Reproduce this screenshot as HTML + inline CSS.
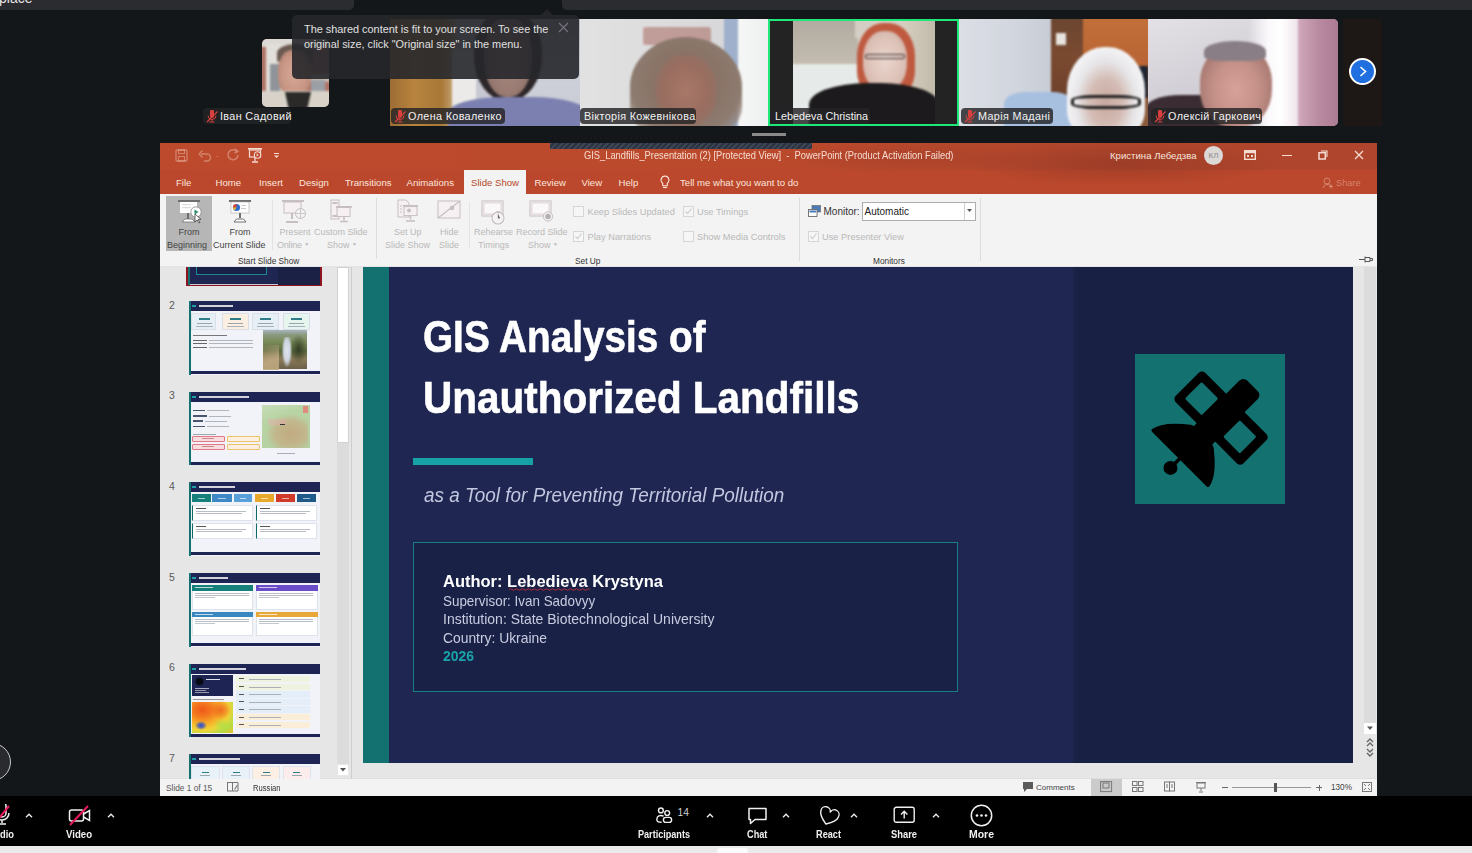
<!DOCTYPE html>
<html><head><meta charset="utf-8">
<style>
*{margin:0;padding:0;box-sizing:border-box}
html,body{width:1472px;height:853px;overflow:hidden;background:#14171a;font-family:"Liberation Sans",sans-serif;position:relative}
.a{position:absolute}
.t{position:absolute;white-space:nowrap;line-height:1}
</style></head><body>
<div class="a" style="left:0px;top:0px;width:354px;height:10px;background:#2b2c2f;border-radius:0 0 5px 0"></div>
<div class="a" style="left:562px;top:0px;width:910px;height:10px;background:#2b2c2f;border-radius:0 0 0 5px"></div>
<div class="t" style="left:-1px;top:-9.5px;font-size:14px;color:#e6e6e6;font-weight:normal;">place</div>
<div class="a" style="left:262px;top:39px;width:67px;height:68px;overflow:hidden;background:#b07466;border-radius:5px"><div class="a" style="left:0;top:0;width:67px;height:68px;filter:blur(1.2px)"><div class="a" style="left:-3px;top:-3px;width:73px;height:11px;background:#dcd8d4;"></div><div class="a" style="left:4px;top:5px;width:16px;height:52px;background:#e2deda;"></div><div class="a" style="left:8px;top:25px;width:10px;height:30px;background:#8e949a;"></div><div class="a" style="left:46px;top:35px;width:24px;height:8px;background:#c8b8b0;"></div><div class="a" style="left:49px;top:41px;width:14px;height:18px;background:#9aa0a6;"></div><div class="a" style="left:15px;top:5px;width:36px;height:18px;background:#6a5a50;border-radius:50% 50% 10% 10%"></div><div class="a" style="left:16px;top:11px;width:33px;height:48px;background:radial-gradient(ellipse at 50% 50%,#d8aa98 0,#c89684 55%,#a87868 100%);border-radius:42% 42% 45% 45%"></div><div class="a" style="left:-3px;top:52px;width:73px;height:19px;background:#d8d2c8;"></div><div class="a" style="left:23px;top:53px;width:26px;height:18px;background:#2c2a28;clip-path:polygon(0 0,100% 0,85% 100%,15% 100%)"></div></div></div>
<div class="a" style="left:203px;top:108px;width:88px;height:16px;background:rgba(35,35,38,.82);border-radius:4px"></div>
<svg class="a" style="left:206px;top:110px;" width="12" height="13" viewBox="0 0 12 13"><path d="M4 1.5 a2 2 0 0 1 4 0 v4.5 a2 2 0 0 1 -4 0z" fill="#d8403e"/><path d="M2 5.5 a4 4 0 0 0 8 0 M6 9.5 v2 M3.5 12 h5" fill="none" stroke="#d8403e" stroke-width="1"/><path d="M1 12 L11.5 1.5" stroke="#d8403e" stroke-width="1.3"/></svg>
<div class="t" style="left:220px;top:111px;font-size:10.8px;color:#f2f2f2;font-weight:normal;letter-spacing:.35px">Іван Садовий</div>
<div class="a" style="left:390px;top:19px;width:190px;height:107px;overflow:hidden;background:#c8c8d2;"><div class="a" style="left:0;top:0;width:190px;height:107px;filter:blur(1.2px)"><div class="a" style="left:-3px;top:-3px;width:68px;height:113px;background:linear-gradient(90deg,#9a6a34,#b8843e 40%,#a87838 80%,#c8a878);"></div><div class="a" style="left:62px;top:30px;width:24px;height:65px;background:#eceae8;"></div><div class="a" style="left:118px;top:-3px;width:75px;height:113px;background:linear-gradient(180deg,#b0b4be,#cdd0d8 60%,#c8cad6);"></div><div class="a" style="left:84px;top:-10px;width:68px;height:92px;background:#2c2628;border-radius:48%"></div><div class="a" style="left:94px;top:-2px;width:48px;height:80px;background:radial-gradient(ellipse at 50% 55%,#a88a80 0,#9a7c74 50%,#7a6058 100%);border-radius:46%"></div><div class="a" style="left:58px;top:78px;width:140px;height:40px;background:#7b80b0;border-radius:40% 40% 0 0"></div></div></div>
<div class="a" style="left:391px;top:108px;width:114px;height:16px;background:rgba(35,35,38,.82);border-radius:4px"></div>
<svg class="a" style="left:394px;top:110px;" width="12" height="13" viewBox="0 0 12 13"><path d="M4 1.5 a2 2 0 0 1 4 0 v4.5 a2 2 0 0 1 -4 0z" fill="#d8403e"/><path d="M2 5.5 a4 4 0 0 0 8 0 M6 9.5 v2 M3.5 12 h5" fill="none" stroke="#d8403e" stroke-width="1"/><path d="M1 12 L11.5 1.5" stroke="#d8403e" stroke-width="1.3"/></svg>
<div class="t" style="left:408px;top:111px;font-size:10.8px;color:#f2f2f2;font-weight:normal;letter-spacing:.35px">Олена Коваленко</div>
<div class="a" style="left:580px;top:19px;width:189px;height:107px;overflow:hidden;background:#dcdcdc;"><div class="a" style="left:0;top:0;width:189px;height:107px;filter:blur(1.2px)"><div class="a" style="left:-3px;top:-3px;width:148px;height:113px;background:linear-gradient(90deg,#e2e2e2,#d8d8da);"></div><div class="a" style="left:144px;top:-3px;width:14px;height:113px;background:#9fb0cc;"></div><div class="a" style="left:158px;top:-3px;width:34px;height:113px;background:linear-gradient(90deg,#f6f6f6,#eceff0);"></div><div class="a" style="left:63px;top:8px;width:68px;height:18px;background:rgba(160,80,70,.45);border-radius:3px"></div><div class="a" style="left:50px;top:18px;width:112px;height:100px;background:radial-gradient(ellipse at 50% 45%,#8a6a5e 0,#8a7468 45%,#8e7c70 70%,rgba(150,135,125,0) 100%);border-radius:50% 50% 30% 30%"></div><div class="a" style="left:76px;top:36px;width:60px;height:72px;background:radial-gradient(ellipse at 50% 50%,#a87868 0,#9a6e60 50%,rgba(150,110,95,0) 100%);border-radius:45%"></div></div></div>
<div class="a" style="left:580px;top:108px;width:116px;height:16px;background:rgba(35,35,38,.82);border-radius:4px"></div>
<div class="t" style="left:584px;top:111px;font-size:10.8px;color:#f2f2f2;font-weight:normal;letter-spacing:.35px">Вікторія Кожевнікова</div>
<div class="a" style="left:768px;top:19px;width:191px;height:107px;background:#232323;border:2px solid #1ee87a"></div>
<div class="a" style="left:793px;top:21px;width:142px;height:103px;overflow:hidden;background:#d8d4cc;"><div class="a" style="left:0;top:0;width:142px;height:103px;filter:blur(1.2px)"><div class="a" style="left:-3px;top:-3px;width:68px;height:46px;background:linear-gradient(180deg,#b0aaa0,#c4bcb0);"></div><div class="a" style="left:-3px;top:43px;width:70px;height:63px;background:#e6eae8;"></div><div class="a" style="left:62px;top:-3px;width:50px;height:20px;background:#d4cec4;"></div><div class="a" style="left:110px;top:-3px;width:35px;height:109px;background:linear-gradient(90deg,#d6cebf,#c0b8a8);"></div><div class="a" style="left:64px;top:2px;width:58px;height:74px;background:#bf5a40;border-radius:45% 45% 35% 35%"></div><div class="a" style="left:70px;top:10px;width:44px;height:60px;background:radial-gradient(ellipse at 50% 50%,#ead6ce 0,#dcc0b6 60%,#c8a090);border-radius:45%"></div><div class="a" style="left:72px;top:33px;width:40px;height:5px;background:transparent;border:1.4px solid #3a3030;border-radius:2px"></div><div class="a" style="left:16px;top:62px;width:130px;height:48px;background:#1c1a1c;border-radius:45% 45% 0 0"></div></div></div>
<div class="a" style="left:771px;top:108px;width:99px;height:16px;background:rgba(35,35,38,.82);border-radius:4px"></div>
<div class="t" style="left:775px;top:111px;font-size:10.8px;color:#f2f2f2;font-weight:normal;letter-spacing:0">Lebedeva Christina</div>
<div class="a" style="left:959px;top:19px;width:189px;height:107px;overflow:hidden;background:#d2d6de;"><div class="a" style="left:0;top:0;width:189px;height:107px;filter:blur(1.2px)"><div class="a" style="left:-3px;top:-3px;width:95px;height:113px;background:linear-gradient(90deg,#dcdfe6,#d0d4dc 70%,#c8ccd4);"></div><div class="a" style="left:92px;top:-3px;width:32px;height:100px;background:linear-gradient(180deg,#6a4630,#7a4a30 40%,#6a3e28);"></div><div class="a" style="left:97px;top:14px;width:10px;height:12px;background:#e8e4e0;"></div><div class="a" style="left:124px;top:-3px;width:68px;height:50px;background:linear-gradient(180deg,#c4703a,#b86434);"></div><div class="a" style="left:124px;top:47px;width:68px;height:63px;background:#8a5a3a;"></div><div class="a" style="left:175px;top:47px;width:14px;height:32px;background:#1e2430;"></div><div class="a" style="left:45px;top:73px;width:70px;height:40px;background:#a8c0e0;border-radius:30% 30% 0 0"></div><div class="a" style="left:108px;top:28px;width:78px;height:90px;background:radial-gradient(ellipse at 50% 62%,#c8a8a0 0,#d4bcb4 30%,#e6e4e6 52%,#f2f2f4 70%);border-radius:48% 48% 30% 30%"></div><div class="a" style="left:112px;top:76px;width:70px;height:14px;background:transparent;border:3.5px solid #222;border-radius:35%"></div></div></div>
<div class="a" style="left:961px;top:108px;width:92px;height:16px;background:rgba(35,35,38,.82);border-radius:4px"></div>
<svg class="a" style="left:964px;top:110px;" width="12" height="13" viewBox="0 0 12 13"><path d="M4 1.5 a2 2 0 0 1 4 0 v4.5 a2 2 0 0 1 -4 0z" fill="#d8403e"/><path d="M2 5.5 a4 4 0 0 0 8 0 M6 9.5 v2 M3.5 12 h5" fill="none" stroke="#d8403e" stroke-width="1"/><path d="M1 12 L11.5 1.5" stroke="#d8403e" stroke-width="1.3"/></svg>
<div class="t" style="left:978px;top:111px;font-size:10.8px;color:#f2f2f2;font-weight:normal;letter-spacing:.35px">Марія Мадані</div>
<div class="a" style="left:1148px;top:19px;width:190px;height:107px;overflow:hidden;background:#d0cfd6;border-radius:0 5px 5px 0"><div class="a" style="left:0;top:0;width:190px;height:107px;filter:blur(1.2px)"><div class="a" style="left:-3px;top:-3px;width:118px;height:113px;background:linear-gradient(160deg,#e4e2e6,#d4d2d8 50%,#c4c2c8);"></div><div class="a" style="left:100px;top:-3px;width:55px;height:113px;background:linear-gradient(90deg,rgba(240,230,240,0),#fbf8fb 35%,#ffffff 60%,#eadce6);"></div><div class="a" style="left:150px;top:-3px;width:43px;height:113px;background:linear-gradient(90deg,#d0a8bc,#b88aa0 50%,#a87890);"></div><div class="a" style="left:-3px;top:76px;width:90px;height:35px;background:#3a2c32;border-radius:40% 40% 0 0"></div><div class="a" style="left:52px;top:26px;width:72px;height:82px;background:radial-gradient(ellipse at 50% 55%,#d6a29a 0,#c49088 45%,#a87a72 75%);border-radius:45%"></div><div class="a" style="left:56px;top:22px;width:62px;height:20px;background:#8a7e86;border-radius:50% 50% 25% 25%"></div></div></div>
<div class="a" style="left:1151px;top:108px;width:111px;height:16px;background:rgba(35,35,38,.82);border-radius:4px"></div>
<svg class="a" style="left:1154px;top:110px;" width="12" height="13" viewBox="0 0 12 13"><path d="M4 1.5 a2 2 0 0 1 4 0 v4.5 a2 2 0 0 1 -4 0z" fill="#d8403e"/><path d="M2 5.5 a4 4 0 0 0 8 0 M6 9.5 v2 M3.5 12 h5" fill="none" stroke="#d8403e" stroke-width="1"/><path d="M1 12 L11.5 1.5" stroke="#d8403e" stroke-width="1.3"/></svg>
<div class="t" style="left:1168px;top:111px;font-size:10.8px;color:#f2f2f2;font-weight:normal;letter-spacing:.35px">Олексій Гаркович</div>
<div class="a" style="left:1343px;top:19px;width:39px;height:107px;background:#1d1816;"></div>
<div class="a" style="left:1349px;top:58px;width:27px;height:27px;border-radius:50%;background:#1f6fe0;border:2.5px solid #fff"></div>
<svg class="a" style="left:1356px;top:65px;" width="13" height="13" viewBox="0 0 13 13"><path d="M4.5 2 l5 4.5 -5 4.5" fill="none" stroke="#fff" stroke-width="1.6"/></svg>
<div class="a" style="left:752px;top:133px;width:34px;height:3px;background:#8a8a8a;"></div>
<div class="a" style="left:292px;top:15px;width:287px;height:64px;border-radius:5px;background:rgba(38,39,43,.9)"></div>
<svg class="a" style="left:540px;top:8px;" width="14" height="8" viewBox="0 0 14 8"><path d="M0 8 L7 1 L14 8z" fill="rgba(38,39,43,.9)"/></svg>
<div class="t" style="left:304px;top:24px;font-size:10.9px;color:#e0e0e0;font-weight:normal;">The shared content is fit to your screen. To see the</div>
<div class="t" style="left:304px;top:39px;font-size:10.9px;color:#e0e0e0;font-weight:normal;">original size, click "Original size" in the menu.</div>
<svg class="a" style="left:558px;top:22px;" width="11" height="11" viewBox="0 0 11 11"><path d="M1 1 L10 10 M10 1 L1 10" stroke="#75727e" stroke-width="1.2"/></svg>
<div class="a" style="left:160px;top:143px;width:1217px;height:653px;background:#e6e6e6;"></div>
<div class="a" style="left:160px;top:143px;width:1217px;height:27px;background:linear-gradient(90deg,#bd4a2d 0%,#bb492c 50%,#b0462c 80%,#ae452c 100%);"></div>
<div class="a" style="left:160px;top:170px;width:1217px;height:24px;background:#bb482c;"></div>
<div class="a" style="left:960px;top:143px;width:320px;height:46px;background:radial-gradient(ellipse 50% 50% at 50% 45%,rgba(140,52,36,.55),rgba(140,52,36,0) 100%);"></div>
<div class="a" style="left:780px;top:143px;width:260px;height:30px;background:radial-gradient(ellipse 50% 50% at 50% 50%,rgba(150,58,40,.35),rgba(150,58,40,0) 100%);"></div>
<div class="a" style="left:550px;top:143px;width:262px;height:6px;background:repeating-linear-gradient(135deg,#3d4656 0 2px,#2c3340 2px 4px);"></div>
<svg class="a" style="left:175px;top:149px;" width="13" height="13" viewBox="0 0 13 13"><rect x="1" y="1" width="11" height="11" rx="1" fill="none" stroke="rgba(240,200,185,.45)" stroke-width="1.3"/><rect x="3.5" y="1" width="6" height="3.5" fill="none" stroke="rgba(240,200,185,.45)" stroke-width="1"/><rect x="3.5" y="7.5" width="6" height="4.5" fill="none" stroke="rgba(240,200,185,.45)" stroke-width="1"/></svg>
<svg class="a" style="left:198px;top:149px;" width="14" height="13" viewBox="0 0 14 13"><path d="M3 5 h6 a3.5 3.5 0 0 1 0 7 h-3" fill="none" stroke="rgba(240,200,185,.45)" stroke-width="1.4"/><path d="M1 5 l3.5-3.5 M1 5 l3.5 3.5" fill="none" stroke="rgba(240,200,185,.45)" stroke-width="1.4"/></svg>
<div class="t" style="left:216px;top:152px;font-size:8px;color:rgba(240,200,185,.45);font-weight:normal;">-</div>
<svg class="a" style="left:226px;top:148px;" width="14" height="14" viewBox="0 0 14 14"><path d="M10.5 3.2 A5 5 0 1 0 12 7" fill="none" stroke="rgba(240,200,185,.45)" stroke-width="1.5"/><path d="M9 1 l3 2.5 -3.5 1.5" fill="none" stroke="rgba(240,200,185,.45)" stroke-width="1.4"/></svg>
<svg class="a" style="left:247px;top:147px;" width="16" height="17" viewBox="0 0 16 17"><rect x="1" y="1" width="14" height="1.6" fill="#f4dcd3"/><rect x="2.5" y="3" width="11" height="7" fill="none" stroke="#f4dcd3" stroke-width="1.2"/><circle cx="10.5" cy="8" r="3.2" fill="#bd4a2d" stroke="#f4dcd3" stroke-width="1.1"/><path d="M9.6 6.5 l2.2 1.5 -2.2 1.5z" fill="#f4dcd3"/><path d="M8 10 v4 M5 15 h6" stroke="#f4dcd3" stroke-width="1.3"/></svg>
<svg class="a" style="left:273px;top:152px;" width="7" height="7" viewBox="0 0 7 7"><rect x="1" y="1" width="5" height="1" fill="#f4dcd3"/><path d="M1 3.5 h5 l-2.5 2.5z" fill="#f4dcd3"/></svg>
<div class="t" style="left:584px;top:150.2px;font-size:10.5px;color:#f6dcd2;font-weight:normal;transform:scaleX(0.887);transform-origin:0 0;">GIS_Landfills_Presentation (2) [Protected View]&nbsp;&nbsp;-&nbsp;&nbsp;PowerPoint (Product Activation Failed)</div>
<div class="t" style="left:1110px;top:151px;font-size:9.6px;color:#f8e4dc;font-weight:normal;">Кристина Лебедзва</div>
<div class="a" style="left:1204px;top:146px;width:19px;height:19px;border-radius:50%;background:#dcd8d6;color:#8a8a8a;font-size:8px;line-height:19px;text-align:center">КЛ</div>
<svg class="a" style="left:1244px;top:150px;" width="12" height="10" viewBox="0 0 12 10"><rect x=".7" y=".7" width="10.6" height="8.6" fill="none" stroke="#f4dcd3" stroke-width="1.4"/><rect x="1" y="1" width="10" height="2.2" fill="#f4dcd3"/><rect x="3" y="5" width="2" height="2" fill="#f4dcd3"/><rect x="7" y="5" width="2" height="2" fill="#f4dcd3"/></svg>
<div class="a" style="left:1282px;top:155px;width:9.5px;height:1.3px;background:#f4dcd3;"></div>
<svg class="a" style="left:1318px;top:150px;" width="10" height="10" viewBox="0 0 10 10"><rect x="1" y="2.7" width="6.3" height="6.3" fill="none" stroke="#f4dcd3" stroke-width="1.5"/><path d="M3 1 h6 v6" fill="none" stroke="#f4dcd3" stroke-width="1.1"/></svg>
<svg class="a" style="left:1354px;top:150px;" width="10" height="10" viewBox="0 0 10 10"><path d="M1 1 L9 9 M9 1 L1 9" stroke="#f4dcd3" stroke-width="1.3"/></svg>
<div class="t" style="left:176px;top:177.5px;font-size:9.6px;color:#fbe6de;font-weight:normal;">File</div>
<div class="t" style="left:215.5px;top:177.5px;font-size:9.6px;color:#fbe6de;font-weight:normal;">Home</div>
<div class="t" style="left:259px;top:177.5px;font-size:9.6px;color:#fbe6de;font-weight:normal;">Insert</div>
<div class="t" style="left:299px;top:177.5px;font-size:9.6px;color:#fbe6de;font-weight:normal;">Design</div>
<div class="t" style="left:345px;top:177.5px;font-size:9.6px;color:#fbe6de;font-weight:normal;">Transitions</div>
<div class="t" style="left:406.5px;top:177.5px;font-size:9.6px;color:#fbe6de;font-weight:normal;">Animations</div>
<div class="t" style="left:534.5px;top:177.5px;font-size:9.6px;color:#fbe6de;font-weight:normal;">Review</div>
<div class="t" style="left:581.5px;top:177.5px;font-size:9.6px;color:#fbe6de;font-weight:normal;">View</div>
<div class="t" style="left:618.5px;top:177.5px;font-size:9.6px;color:#fbe6de;font-weight:normal;">Help</div>
<div class="a" style="left:464px;top:170px;width:62px;height:25px;background:#f3f3f3;"></div>
<div class="t" style="left:471px;top:177.5px;font-size:9.6px;color:#b5472b;font-weight:normal;">Slide Show</div>
<svg class="a" style="left:660px;top:175px;" width="10" height="14" viewBox="0 0 10 14"><path d="M5 1 a4 4 0 0 0 -2.3 7.2 v2.5 h4.6 v-2.5 A4 4 0 0 0 5 1z" fill="none" stroke="#fbe6de" stroke-width="1.1"/><path d="M3 12.5 h4" stroke="#fbe6de" stroke-width="1.1"/></svg>
<div class="t" style="left:680px;top:177.5px;font-size:9.6px;color:#fbe6de;font-weight:normal;">Tell me what you want to do</div>
<svg class="a" style="left:1322px;top:177px;" width="11" height="12" viewBox="0 0 11 12"><circle cx="5" cy="4" r="3" fill="none" stroke="rgba(240,190,175,.5)" stroke-width="1"/><path d="M1 11 a4.5 4.5 0 0 1 8 -2 M7 9.5 h4 M9 7.5 v4" fill="none" stroke="rgba(240,190,175,.5)" stroke-width="1"/></svg>
<div class="t" style="left:1336px;top:179px;font-size:9.2px;color:rgba(240,190,175,.5);font-weight:normal;">Share</div>
<div class="a" style="left:160px;top:194px;width:1217px;height:72px;background:#f3f3f3;"></div>
<div class="a" style="left:160px;top:266px;width:1217px;height:1px;background:#e4e4e4;"></div>
<div class="a" style="left:166px;top:196px;width:46px;height:55px;background:#b6b6b6;"></div>
<svg class="a" style="left:177px;top:199px;" width="26" height="26" viewBox="0 0 26 26"><rect x="1" y="1" width="22" height="2" fill="#6f6f6f"/><rect x="3" y="3" width="17" height="11" fill="#fff"/><rect x="5" y="5" width="9" height="1.2" fill="#ddd"/><rect x="5" y="8" width="9" height="1.2" fill="#ddd"/><path d="M11 14 v6" stroke="#6f6f6f" stroke-width="2"/><path d="M5 23 l3-3 h7 l3 3z" fill="#fff" stroke="#6f6f6f" stroke-width=".8"/><circle cx="19" cy="13" r="5.2" fill="#fff" stroke="#888" stroke-width=".8"/><path d="M17.5 10.5 l4 2.5 -4 2.5z" fill="#2e8b6e"/><path d="M18 15 l0 8 2-2 2 3 1-.6 -2-3 3 0z" fill="#fff" stroke="#333" stroke-width=".7"/></svg>
<div class="t" style="left:178.5px;top:228.3px;font-size:9px;color:#444444;font-weight:normal;">From</div>
<div class="t" style="left:167px;top:241.3px;font-size:9px;color:#444444;font-weight:normal;">Beginning</div>
<svg class="a" style="left:228px;top:199px;" width="26" height="26" viewBox="0 0 26 26"><rect x="1" y="1" width="22" height="2" fill="#6f6f6f"/><rect x="3" y="3" width="18" height="11" fill="#fff" stroke="#aaa" stroke-width=".6"/><circle cx="8.5" cy="8.5" r="3.6" fill="#2f6fcf"/><path d="M8.5 8.5 V4.9 A3.6 3.6 0 0 0 4.9 8.5z" fill="#e0452c"/><path d="M8.5 8.5 H4.9 A3.6 3.6 0 0 0 6.5 11.5z" fill="#f2b830"/><rect x="13" y="6" width="5" height="1" fill="#ccc"/><rect x="13" y="9" width="5" height="1" fill="#ccc"/><path d="M12 14 v5" stroke="#6f6f6f" stroke-width="2"/><path d="M6 23 l2.5-3 h7 l2.5 3z" fill="#fff" stroke="#6f6f6f" stroke-width="1"/></svg>
<div class="t" style="left:229.5px;top:228.3px;font-size:9px;color:#444444;font-weight:normal;">From</div>
<div class="t" style="left:213px;top:241.3px;font-size:9px;color:#444444;font-weight:normal;">Current Slide</div>
<div class="a" style="left:272px;top:200px;width:1px;height:50px;background:#e2e2e2;"></div>
<svg class="a" style="left:281px;top:199px;" width="28" height="26" viewBox="0 0 28 26"><rect x="1" y="1" width="22" height="2" fill="#c6bec2"/><rect x="3" y="3" width="17" height="11" fill="#f7f0f3" stroke="#c6bec2" stroke-width="1"/><path d="M11 14 v6" stroke="#c6bec2" stroke-width="2"/><path d="M5 23 h12" stroke="#c6bec2" stroke-width="2"/><circle cx="19.5" cy="14.5" r="5" fill="#f3f3f3" stroke="#c6bec2" stroke-width="1"/><path d="M14.5 14.5 h10 M19.5 9.5 v10" stroke="#c6bec2" stroke-width=".8"/></svg>
<div class="t" style="left:279.5px;top:228.3px;font-size:9px;color:#b9b9b9;font-weight:normal;">Present</div>
<div class="t" style="left:277px;top:241.3px;font-size:9px;color:#b9b9b9;font-weight:normal;letter-spacing:-.2px">Online <span style="font-size:5px;vertical-align:2px">▼</span></div>
<svg class="a" style="left:329px;top:199px;" width="26" height="26" viewBox="0 0 26 26"><rect x="2" y="1" width="8" height="19" fill="#f7f0f3" stroke="#c6bec2" stroke-width="1"/><rect x="3.5" y="3" width="5" height="2" fill="#c6bec2"/><rect x="3.5" y="16" width="5" height="2" fill="#c6bec2"/><rect x="7" y="7" width="16" height="1.6" fill="#c6bec2"/><rect x="8" y="8.5" width="13" height="9" fill="#f7f0f3" stroke="#c6bec2" stroke-width="1"/><path d="M15 17.5 v4 M11 22.5 h8" stroke="#c6bec2" stroke-width="1.6"/></svg>
<div class="t" style="left:314px;top:228.3px;font-size:9px;color:#b9b9b9;font-weight:normal;">Custom Slide</div>
<div class="t" style="left:327px;top:241.3px;font-size:9px;color:#b9b9b9;font-weight:normal;">Show <span style="font-size:5px;vertical-align:2px">▼</span></div>
<div class="a" style="left:376px;top:198px;width:1px;height:61px;background:#dcdcdc;"></div>
<svg class="a" style="left:395px;top:199px;" width="26" height="26" viewBox="0 0 26 26"><path d="M3 1 h8 l3 3 v14 h-11z" fill="#f7f0f3" stroke="#c6bec2" stroke-width="1"/><path d="M5 7 h2 M5 10 h2 M5 13 h2" stroke="#c6bec2"/><rect x="8" y="6" width="15" height="1.6" fill="#c6bec2"/><rect x="9" y="7.6" width="13" height="9" fill="#f7f0f3" stroke="#c6bec2" stroke-width="1"/><circle cx="14" cy="11.5" r="2" fill="#c6bec2"/><path d="M15.5 16.6 v4 M11 22 h9" stroke="#c6bec2" stroke-width="1.6"/></svg>
<div class="t" style="left:394px;top:228.3px;font-size:9px;color:#b9b9b9;font-weight:normal;">Set Up</div>
<div class="t" style="left:385px;top:241.3px;font-size:9px;color:#b9b9b9;font-weight:normal;">Slide Show</div>
<svg class="a" style="left:437px;top:199px;" width="26" height="22" viewBox="0 0 26 22"><rect x="1" y="2" width="22" height="17" fill="#f7f0f3" stroke="#c6bec2" stroke-width="1"/><path d="M1 19 L23 2" stroke="#c6bec2" stroke-width="1.2"/><circle cx="15" cy="9" r="2.3" fill="#c6bec2"/></svg>
<div class="t" style="left:440px;top:228.3px;font-size:9px;color:#b9b9b9;font-weight:normal;">Hide</div>
<div class="t" style="left:439px;top:241.3px;font-size:9px;color:#b9b9b9;font-weight:normal;">Slide</div>
<div class="a" style="left:469px;top:202px;width:1px;height:46px;background:#e4e4e4;"></div>
<svg class="a" style="left:481px;top:200px;" width="28" height="26" viewBox="0 0 28 26"><rect x="1" y="1" width="21" height="15" fill="#f7f0f3" stroke="#c6bec2" stroke-width="1"/><rect x="3" y="3" width="17" height="11" fill="#fbf8f9" stroke="#c6bec2" stroke-width=".6"/><circle cx="17" cy="18" r="6" fill="#f3f3f3" stroke="#c6bec2" stroke-width="1.1"/><path d="M17 14 v4.5 h2" stroke="#c6bec2" stroke-width="1"/><path d="M15 11 h4 l-2 3z" fill="#c6bec2"/></svg>
<div class="t" style="left:474px;top:228.3px;font-size:9px;color:#b9b9b9;font-weight:normal;">Rehearse</div>
<div class="t" style="left:478px;top:241.3px;font-size:9px;color:#b9b9b9;font-weight:normal;">Timings</div>
<svg class="a" style="left:529px;top:200px;" width="28" height="26" viewBox="0 0 28 26"><rect x="1" y="1" width="21" height="15" fill="#f7f0f3" stroke="#c6bec2" stroke-width="1"/><rect x="3" y="3" width="17" height="11" fill="#fbf8f9" stroke="#c6bec2" stroke-width=".6"/><circle cx="19" cy="16.5" r="4.6" fill="#f3f3f3" stroke="#c6bec2" stroke-width="1"/><circle cx="19" cy="16.5" r="2.8" fill="#b5b0b2"/></svg>
<div class="t" style="left:516px;top:228.3px;font-size:9px;color:#b9b9b9;font-weight:normal;">Record Slide</div>
<div class="t" style="left:528px;top:241.3px;font-size:9px;color:#b9b9b9;font-weight:normal;">Show <span style="font-size:5px;vertical-align:2px">▼</span></div>
<svg class="a" style="left:573px;top:206px;" width="11" height="11" viewBox="0 0 11 11"><rect x=".5" y=".5" width="10" height="10" fill="#f6f6f6" stroke="#d6d6d6"/></svg>
<div class="t" style="left:587.5px;top:208px;font-size:9.3px;color:#b9b9b9;font-weight:normal;">Keep Slides Updated</div>
<svg class="a" style="left:573px;top:231px;" width="11" height="11" viewBox="0 0 11 11"><rect x=".5" y=".5" width="10" height="10" fill="#f6f6f6" stroke="#d6d6d6"/><path d="M2.5 5.5 l2 2 4-5" fill="none" stroke="#cfcfcf" stroke-width="1.2"/></svg>
<div class="t" style="left:587.5px;top:233px;font-size:9.3px;color:#b9b9b9;font-weight:normal;">Play Narrations</div>
<svg class="a" style="left:683px;top:206px;" width="11" height="11" viewBox="0 0 11 11"><rect x=".5" y=".5" width="10" height="10" fill="#f6f6f6" stroke="#d6d6d6"/><path d="M2.5 5.5 l2 2 4-5" fill="none" stroke="#cfcfcf" stroke-width="1.2"/></svg>
<div class="t" style="left:697px;top:208px;font-size:9.3px;color:#b9b9b9;font-weight:normal;">Use Timings</div>
<svg class="a" style="left:683px;top:231px;" width="11" height="11" viewBox="0 0 11 11"><rect x=".5" y=".5" width="10" height="10" fill="#f6f6f6" stroke="#d6d6d6"/></svg>
<div class="t" style="left:697px;top:233px;font-size:9.3px;color:#b9b9b9;font-weight:normal;">Show Media Controls</div>
<div class="t" style="left:575px;top:257px;font-size:8.3px;color:#333;font-weight:normal;">Set Up</div>
<div class="t" style="left:238px;top:257px;font-size:8.3px;color:#333;font-weight:normal;">Start Slide Show</div>
<div class="a" style="left:799px;top:198px;width:1px;height:63px;background:#dcdcdc;"></div>
<svg class="a" style="left:808px;top:205px;" width="13" height="13" viewBox="0 0 13 13"><rect x="4" y=".5" width="8.5" height="6.5" fill="#4a7ab8" stroke="#6b6b6b" stroke-width=".7"/><rect x=".5" y="4.5" width="8.5" height="7" fill="#fff" stroke="#6b6b6b" stroke-width=".9"/><rect x="1.5" y="5.5" width="6.5" height="2" fill="#4a7ab8"/></svg>
<div class="t" style="left:823.5px;top:207px;font-size:10px;color:#333;font-weight:normal;transform:scaleX(1.0);transform-origin:0 0;">Monitor:</div>
<div class="a" style="left:862px;top:202px;width:114px;height:19px;background:#fff;border:1px solid #adadad"></div>
<div class="a" style="left:964px;top:203px;width:1px;height:17px;background:#d0d0d0;"></div>
<svg class="a" style="left:967px;top:209px;" width="6" height="4" viewBox="0 0 6 4"><path d="M0 0 h5 l-2.5 3z" fill="#555"/></svg>
<div class="t" style="left:864.5px;top:207px;font-size:10px;color:#222;font-weight:normal;transform:scaleX(1.0);transform-origin:0 0;">Automatic</div>
<svg class="a" style="left:808px;top:231px;" width="11" height="11" viewBox="0 0 11 11"><rect x=".5" y=".5" width="10" height="10" fill="#f6f6f6" stroke="#d6d6d6"/><path d="M2.5 5.5 l2 2 4-5" fill="none" stroke="#cfcfcf" stroke-width="1.2"/></svg>
<div class="t" style="left:822px;top:233px;font-size:9.3px;color:#b9b9b9;font-weight:normal;">Use Presenter View</div>
<div class="t" style="left:873px;top:257px;font-size:8.3px;color:#333;font-weight:normal;">Monitors</div>
<div class="a" style="left:980px;top:198px;width:1px;height:63px;background:#dcdcdc;"></div>
<svg class="a" style="left:1358px;top:255px;" width="15" height="9" viewBox="0 0 15 9"><path d="M1 4.5 h6 M7 1.5 v6 M7 2.5 h5 v4 h-5 M12 3.5 h2.5 v2 h-2.5" fill="none" stroke="#555" stroke-width="1"/></svg>
<div class="a" style="left:160px;top:267px;width:191px;height:512px;background:#e6e6e6;"></div>
<div class="a" style="left:337px;top:267px;width:12px;height:497px;background:#dcdcdc;"></div>
<div class="a" style="left:337px;top:267px;width:12px;height:176px;background:#ffffff;border:1px solid #d2d2d2"></div>
<svg class="a" style="left:338px;top:765px;" width="10" height="10" viewBox="0 0 10 10"><rect width="10" height="10" fill="#fff"/><path d="M2 3 h6 l-3 3.5z" fill="#555"/></svg>
<div class="a" style="left:351px;top:267px;width:1px;height:512px;background:#cdcdcd;"></div>
<div class="a" style="left:352px;top:267px;width:1025px;height:512px;background:#e6e6e6;"></div>
<div class="a" style="left:1364px;top:267px;width:12px;height:456px;background:#dcdcdc;"></div>
<svg class="a" style="left:1364px;top:723px;" width="12" height="11" viewBox="0 0 12 11"><rect width="12" height="11" fill="#fff"/><path d="M3 3.5 h6 l-3 3.5z" fill="#555"/></svg>
<svg class="a" style="left:1366px;top:738px;" width="8" height="9" viewBox="0 0 8 9"><path d="M1 4 l3-3 3 3 M1 8 l3-3 3 3" fill="none" stroke="#666" stroke-width="1.4"/></svg>
<svg class="a" style="left:1366px;top:748px;" width="8" height="10" viewBox="0 0 8 10"><path d="M1 1 l3 3 3-3 M1 5 l3 3 3-3" fill="none" stroke="#666" stroke-width="1.4"/></svg>
<div class="a" style="left:160px;top:779px;width:1217px;height:17px;background:#f3f3f3;"></div>
<div class="a" style="left:160px;top:778px;width:1217px;height:1px;background:#dedede;"></div>
<div class="t" style="left:166px;top:784px;font-size:8.3px;color:#555;font-weight:normal;">Slide 1 of 15</div>
<svg class="a" style="left:227px;top:782px;" width="12" height="10" viewBox="0 0 12 10"><rect x=".5" y=".5" width="5" height="8.5" fill="none" stroke="#777" stroke-width="1"/><path d="M6 .5 h5 v8.5 h-5" fill="none" stroke="#777" stroke-width="1"/><path d="M7.5 7.5 l3-4.5" stroke="#777" stroke-width="1.1"/></svg>
<div class="t" style="left:253px;top:784px;font-size:8.3px;color:#333;font-weight:normal;transform:scaleX(0.92);transform-origin:0 0;">Russian</div>
<svg class="a" style="left:1022px;top:781px;" width="12" height="12" viewBox="0 0 12 12"><path d="M1 1 h10 v7 h-6 l-3 3 v-3 h-1z" fill="#5a5a5a"/></svg>
<div class="t" style="left:1036px;top:783.5px;font-size:8px;color:#444;font-weight:normal;">Comments</div>
<div class="a" style="left:1091px;top:779px;width:31px;height:17px;background:#cbcbcb;"></div>
<svg class="a" style="left:1100px;top:781px;" width="13" height="12" viewBox="0 0 13 12"><rect x=".6" y=".6" width="11" height="10" fill="none" stroke="#777"/><rect x="3" y="2" width="6" height="5" fill="none" stroke="#777"/></svg>
<svg class="a" style="left:1132px;top:781px;" width="12" height="12" viewBox="0 0 12 12"><rect x=".5" y=".5" width="4.5" height="4" fill="none" stroke="#777"/><rect x="6.5" y=".5" width="4.5" height="4" fill="none" stroke="#777"/><rect x=".5" y="6.5" width="4.5" height="4" fill="none" stroke="#777"/><rect x="6.5" y="6.5" width="4.5" height="4" fill="none" stroke="#777"/></svg>
<svg class="a" style="left:1164px;top:781px;" width="12" height="12" viewBox="0 0 12 12"><rect x=".5" y="1" width="5" height="9" fill="none" stroke="#777"/><rect x="5.5" y="1" width="5" height="9" fill="none" stroke="#777"/><path d="M2 4 h2 M7 4 h2 M2 6 h2 M7 6 h2" stroke="#777"/></svg>
<svg class="a" style="left:1195px;top:781px;" width="12" height="12" viewBox="0 0 12 12"><rect x="1" y="1" width="10" height="1" fill="#777"/><rect x="2" y="2" width="8" height="5" fill="none" stroke="#777"/><path d="M6 7 v3 M4 11 h4" stroke="#777"/></svg>
<div class="a" style="left:1222px;top:787px;width:6px;height:1px;background:#666;"></div>
<div class="a" style="left:1232px;top:787px;width:79px;height:1px;background:#999;"></div>
<div class="a" style="left:1274px;top:783px;width:3px;height:9px;background:#555;"></div>
<div class="a" style="left:1316px;top:787px;width:6px;height:1px;background:#666;"></div>
<div class="a" style="left:1318.5px;top:784.5px;width:1px;height:6px;background:#666;"></div>
<div class="t" style="left:1331px;top:783.5px;font-size:8.2px;color:#444;font-weight:normal;">130%</div>
<svg class="a" style="left:1362px;top:782px;" width="10" height="10" viewBox="0 0 10 10"><rect x=".5" y=".5" width="9" height="9" fill="none" stroke="#777"/><path d="M2 2 l2 2 M8 2 l-2 2 M2 8 l2-2 M8 8 l-2-2" stroke="#777"/></svg>
<div class="a" style="left:363px;top:267px;width:990px;height:496px;background:#1f2652;"></div>
<div class="a" style="left:1073px;top:267px;width:280px;height:496px;background:linear-gradient(90deg,#1b2247 0,#182044 6px,#182043 100%);"></div>
<div class="a" style="left:363px;top:267px;width:26px;height:496px;background:#137270;"></div>
<div class="t" style="left:423px;top:315px;font-size:44px;color:#ffffff;font-weight:bold;font-style:normal;transform:scaleX(0.88);transform-origin:0 0;-webkit-text-stroke:.6px #fff">GIS Analysis of</div>
<div class="t" style="left:423px;top:376px;font-size:44px;color:#ffffff;font-weight:bold;font-style:normal;transform:scaleX(0.92);transform-origin:0 0;-webkit-text-stroke:.6px #fff">Unauthorized Landfills</div>
<div class="a" style="left:413px;top:458px;width:120px;height:7px;background:#17a2a6;"></div>
<div class="t" style="left:424px;top:485.5px;font-size:19.5px;color:#c3c8e0;font-weight:normal;font-style:italic;transform:scaleX(0.97);transform-origin:0 0;">as a Tool for Preventing Territorial Pollution</div>
<div class="a" style="left:413px;top:542px;width:545px;height:150px;background:#1a2146;border:1.5px solid #157f84"></div>
<div class="t" style="left:443px;top:573px;font-size:17px;color:#ffffff;font-weight:bold;font-style:normal;transform:scaleX(0.97);transform-origin:0 0;">Author: Lebedieva Krystyna</div>
<svg class="a" style="left:509px;top:588px;" width="81" height="3" viewBox="0 0 81 3"><path d="M0 1.5 q1.5-1.5 3 0 t3 0 t3 0 t3 0 t3 0 t3 0 t3 0 t3 0 t3 0 t3 0 t3 0 t3 0 t3 0 t3 0 t3 0 t3 0 t3 0 t3 0 t3 0 t3 0 t3 0 t3 0 t3 0 t3 0 t3 0 t3 0 t3 0" fill="none" stroke="#c0303a" stroke-width=".9"/></svg>
<div class="t" style="left:443px;top:594px;font-size:14.5px;color:#c8cce0;font-weight:normal;font-style:normal;transform:scaleX(0.925);transform-origin:0 0;">Supervisor: Ivan Sadovyy</div>
<div class="t" style="left:443px;top:612px;font-size:14.5px;color:#c8cce0;font-weight:normal;font-style:normal;transform:scaleX(0.965);transform-origin:0 0;">Institution: State Biotechnological University</div>
<div class="t" style="left:443px;top:631px;font-size:14.5px;color:#c8cce0;font-weight:normal;font-style:normal;transform:scaleX(0.955);transform-origin:0 0;">Country: Ukraine</div>
<div class="t" style="left:443px;top:649px;font-size:14.5px;color:#18a4a8;font-weight:bold;font-style:normal;transform:scaleX(0.96);transform-origin:0 0;">2026</div>
<svg class="a" style="left:1135px;top:354px;" width="150" height="150" viewBox="0 0 150 150"><rect width="150" height="150" fill="#137270"/>
<g transform="translate(85.7,63.7) rotate(-45)" fill="#000">
 <path fill-rule="evenodd" d="M-16.3 -47.3 h32.6 a4.5 4.5 0 0 1 4.5 4.5 v32.6 a4.5 4.5 0 0 1 -4.5 4.5 h-32.6 a4.5 4.5 0 0 1 -4.5 -4.5 v-32.6 a4.5 4.5 0 0 1 4.5 -4.5z M-10.3 -38.8 a1.5 1.5 0 0 0 -1.5 1.5 v20.6 a1.5 1.5 0 0 0 1.5 1.5 h20.6 a1.5 1.5 0 0 0 1.5 -1.5 v-20.6 a1.5 1.5 0 0 0 -1.5 -1.5z"/>
 <path fill-rule="evenodd" d="M-16.3 6.7 h32.6 a4.5 4.5 0 0 1 4.5 4.5 v32.6 a4.5 4.5 0 0 1 -4.5 4.5 h-32.6 a4.5 4.5 0 0 1 -4.5 -4.5 v-32.6 a4.5 4.5 0 0 1 4.5 -4.5z M-10.3 15.2 a1.5 1.5 0 0 0 -1.5 1.5 v20.6 a1.5 1.5 0 0 0 1.5 1.5 h20.6 a1.5 1.5 0 0 0 1.5 -1.5 v-20.6 a1.5 1.5 0 0 0 -1.5 -1.5z"/>
 <rect x="-30" y="-13" width="75" height="26" rx="5.5"/>
 <path d="M-57 -40.5 Q-44 -39 -26 -16 L-20 0 L-26 16 Q-44 39 -57 40.5 Q-59 40 -58.5 38 L-58.5 -38 Q-59 -40 -57 -40.5Z"/>
 <rect x="-70" y="-1.8" width="14" height="3.6"/>
 <circle cx="-71" cy="0" r="7"/>
</g></svg>
<div class="a" style="left:0;top:0;width:1472px;height:853px;clip-path:inset(267px 1121px 74px 160px)">
<div class="a" style="left:186px;top:260px;width:136px;height:26px;background:#8e1420;"></div>
<div class="a" style="left:188px;top:284px;width:132px;height:1px;background:#c8c8d4;"></div>
<div class="a" style="left:188px;top:260px;width:132px;height:24px;background:#1f2652;"></div>
<div class="a" style="left:278px;top:260px;width:42px;height:24.5px;background:#1a2145;"></div>
<div class="a" style="left:188px;top:260px;width:2px;height:24.5px;background:#137270;"></div>
<div class="a" style="left:196px;top:260px;width:71px;height:14.5px;background:#1a2146;border:.8px solid #1a8a8e"></div>
<div class="a" style="left:188.5px;top:301px;width:131.5px;height:73.5px;background:#f1f3f8;"></div>
<div class="a" style="left:188.5px;top:301px;width:131.5px;height:10px;background:#1e2554;"></div>
<div class="a" style="left:188.5px;top:371.3px;width:131.5px;height:3.2px;background:#1e2554;"></div>
<div class="a" style="left:188.5px;top:301px;width:2px;height:73.5px;background:#137270;"></div>
<div class="a" style="left:192.0px;top:305px;width:4px;height:2px;background:#1aa2a2;"></div>
<div class="a" style="left:199.0px;top:305px;width:34px;height:2.2px;background:rgba(255,255,255,.8);"></div>
<div class="a" style="left:190.7px;top:312.7px;width:25.5px;height:17.7px;background:#e6eff6;border:.5px solid #d8dfe6"></div>
<div class="a" style="left:198.7px;top:318px;width:11px;height:2px;background:#2f7d86;"></div>
<div class="a" style="left:196.7px;top:322.5px;width:15px;height:1px;background:#9aa6ae;"></div>
<div class="a" style="left:195.7px;top:325.5px;width:17px;height:1px;background:#a8b0b8;"></div>
<div class="a" style="left:221.5px;top:312.7px;width:27px;height:17.7px;background:#fcefe2;border:.5px solid #d8dfe6"></div>
<div class="a" style="left:229.5px;top:318px;width:11px;height:2px;background:#2f7d86;"></div>
<div class="a" style="left:227.5px;top:322.5px;width:15px;height:1px;background:#9aa6ae;"></div>
<div class="a" style="left:226.5px;top:325.5px;width:17px;height:1px;background:#a8b0b8;"></div>
<div class="a" style="left:252.29999999999998px;top:312.7px;width:27px;height:17.7px;background:#e6eff6;border:.5px solid #d8dfe6"></div>
<div class="a" style="left:260.29999999999995px;top:318px;width:11px;height:2px;background:#2f7d86;"></div>
<div class="a" style="left:258.29999999999995px;top:322.5px;width:15px;height:1px;background:#9aa6ae;"></div>
<div class="a" style="left:257.29999999999995px;top:325.5px;width:17px;height:1px;background:#a8b0b8;"></div>
<div class="a" style="left:283.1px;top:312.7px;width:27px;height:17.7px;background:#e6f6ef;border:.5px solid #d8dfe6"></div>
<div class="a" style="left:291.1px;top:318px;width:11px;height:2px;background:#2f7d86;"></div>
<div class="a" style="left:289.1px;top:322.5px;width:15px;height:1px;background:#9aa6ae;"></div>
<div class="a" style="left:288.1px;top:325.5px;width:17px;height:1px;background:#a8b0b8;"></div>
<div class="a" style="left:193px;top:334.5px;width:34px;height:1.2px;background:#777;"></div>
<div class="a" style="left:193px;top:339.5px;width:14px;height:1.1px;background:#666;"></div>
<div class="a" style="left:209px;top:339.5px;width:44px;height:1px;background:#b0b4bc;"></div>
<div class="a" style="left:193px;top:343.1px;width:14px;height:1.1px;background:#666;"></div>
<div class="a" style="left:209px;top:343.1px;width:44px;height:1px;background:#b0b4bc;"></div>
<div class="a" style="left:193px;top:346.7px;width:14px;height:1.1px;background:#666;"></div>
<div class="a" style="left:209px;top:346.7px;width:44px;height:1px;background:#b0b4bc;"></div>
<div class="a" style="left:263px;top:330.2px;width:44px;height:39.3px;background:linear-gradient(180deg,#a8b4c0 0%,#8a9a80 12%,#7a8a58 30%,#5f6a40 55%,#8a7a58 75%,#6a6048 100%);"></div>
<div class="a" style="left:263px;top:345px;width:16px;height:25px;background:linear-gradient(160deg,rgba(190,170,130,0),rgba(190,168,128,.9) 60%);"></div>
<div class="a" style="left:282px;top:337px;width:10px;height:30px;background:radial-gradient(ellipse at 50% 45%,#e2e6ee 0,#ccd4de 45%,rgba(200,210,220,0) 75%);"></div>
<div class="a" style="left:290px;top:334px;width:17px;height:30px;background:radial-gradient(ellipse at 50% 50%,rgba(40,50,30,.8),rgba(40,50,30,0) 70%);"></div>
<div class="a" style="left:188.5px;top:391.8px;width:131.5px;height:73.5px;background:#f1f3f8;"></div>
<div class="a" style="left:188.5px;top:391.8px;width:131.5px;height:10px;background:#1e2554;"></div>
<div class="a" style="left:188.5px;top:462.1px;width:131.5px;height:3.2px;background:#1e2554;"></div>
<div class="a" style="left:188.5px;top:391.8px;width:2px;height:73.5px;background:#137270;"></div>
<div class="a" style="left:192.0px;top:395.8px;width:4px;height:2px;background:#1aa2a2;"></div>
<div class="a" style="left:199.0px;top:395.8px;width:50px;height:2.2px;background:rgba(255,255,255,.8);"></div>
<div class="a" style="left:193px;top:410.0px;width:12px;height:1.4px;background:#4a5670;"></div>
<div class="a" style="left:207px;top:410.3px;width:22px;height:1.1px;background:#b0b6c0;"></div>
<div class="a" style="left:193px;top:415.2px;width:14px;height:1.4px;background:#4a5670;"></div>
<div class="a" style="left:209px;top:415.5px;width:22px;height:1.1px;background:#b0b6c0;"></div>
<div class="a" style="left:193px;top:420.4px;width:10px;height:1.4px;background:#4a5670;"></div>
<div class="a" style="left:205px;top:420.7px;width:22px;height:1.1px;background:#b0b6c0;"></div>
<div class="a" style="left:193px;top:425.6px;width:12px;height:1.4px;background:#4a5670;"></div>
<div class="a" style="left:207px;top:425.90000000000003px;width:22px;height:1.1px;background:#b0b6c0;"></div>
<div class="a" style="left:193px;top:433.5px;width:23px;height:1px;background:#9aa;"></div>
<div class="a" style="left:192px;top:435.5px;width:32.5px;height:6.5px;background:#f7dde0;border:.9px solid #e07888;border-radius:1px"></div>
<div class="a" style="left:202px;top:438.0px;width:12px;height:1px;background:#c88;"></div>
<div class="a" style="left:226.6px;top:435.5px;width:33.4px;height:6.5px;background:#fbefdf;border:.9px solid #eec26a;border-radius:1px"></div>
<div class="a" style="left:192px;top:443.5px;width:32.5px;height:6.5px;background:#f7dde0;border:.9px solid #e07888;border-radius:1px"></div>
<div class="a" style="left:202px;top:446.0px;width:12px;height:1px;background:#c88;"></div>
<div class="a" style="left:226.6px;top:443.5px;width:33.4px;height:6.5px;background:#fbefdf;border:.9px solid #eec26a;border-radius:1px"></div>
<div class="a" style="left:261.6px;top:404.7px;width:48px;height:43.3px;background:linear-gradient(160deg,#c8dcb8 0%,#b8d4a4 30%,#b4d0a0 100%);"></div>
<div class="a" style="left:266px;top:414px;width:42px;height:34px;background:radial-gradient(ellipse at 58% 58%,rgba(196,160,120,.8) 0,rgba(200,168,130,.65) 45%,rgba(200,168,130,0) 72%);"></div>
<div class="a" style="left:268px;top:419px;width:18px;height:6px;background:rgba(230,170,170,.45);"></div>
<div class="a" style="left:280px;top:423.5px;width:5px;height:1.4px;background:#333;"></div>
<div class="a" style="left:303px;top:406px;width:5px;height:7px;background:rgba(240,110,110,.7);"></div>
<div class="a" style="left:277px;top:452.5px;width:18px;height:1px;background:#aab;"></div>
<div class="a" style="left:188.5px;top:482px;width:131.5px;height:73.5px;background:#f1f3f8;"></div>
<div class="a" style="left:188.5px;top:482px;width:131.5px;height:10px;background:#1e2554;"></div>
<div class="a" style="left:188.5px;top:552.3px;width:131.5px;height:3.2px;background:#1e2554;"></div>
<div class="a" style="left:188.5px;top:482px;width:2px;height:73.5px;background:#137270;"></div>
<div class="a" style="left:192.0px;top:486px;width:4px;height:2px;background:#1aa2a2;"></div>
<div class="a" style="left:199.0px;top:486px;width:36px;height:2.2px;background:rgba(255,255,255,.8);"></div>
<div class="a" style="left:192.1px;top:494.2px;width:18.599999999999994px;height:7.6px;background:#17807a;"></div>
<div class="a" style="left:198.1px;top:497.5px;width:6.599999999999994px;height:1px;background:rgba(255,255,255,.6);"></div>
<div class="a" style="left:212.4px;top:494.2px;width:19.599999999999994px;height:7.6px;background:#3f88c6;"></div>
<div class="a" style="left:218.4px;top:497.5px;width:7.599999999999994px;height:1px;background:rgba(255,255,255,.6);"></div>
<div class="a" style="left:233.5px;top:494.2px;width:18.5px;height:7.6px;background:#5aa0d8;"></div>
<div class="a" style="left:239.5px;top:497.5px;width:6.5px;height:1px;background:rgba(255,255,255,.6);"></div>
<div class="a" style="left:254.7px;top:494.2px;width:19.30000000000001px;height:7.6px;background:#e8a82a;"></div>
<div class="a" style="left:260.7px;top:497.5px;width:7.300000000000011px;height:1px;background:rgba(255,255,255,.6);"></div>
<div class="a" style="left:276px;top:494.2px;width:19px;height:7.6px;background:#d03a28;"></div>
<div class="a" style="left:282px;top:497.5px;width:7px;height:1px;background:rgba(255,255,255,.6);"></div>
<div class="a" style="left:297px;top:494.2px;width:19px;height:7.6px;background:#1d5a8a;"></div>
<div class="a" style="left:303px;top:497.5px;width:7px;height:1px;background:rgba(255,255,255,.6);"></div>
<div class="a" style="left:192px;top:505.2px;width:61px;height:16.1px;background:#fff;border:.5px solid #dde3ea;border-left:1.3px solid #0f6a68"></div>
<div class="a" style="left:195.5px;top:508.0px;width:10px;height:1.2px;background:#555;"></div>
<div class="a" style="left:195.5px;top:511.2px;width:50px;height:1px;background:#b8bcc4;"></div>
<div class="a" style="left:195.5px;top:513.2px;width:46px;height:1px;background:#b8bcc4;"></div>
<div class="a" style="left:256px;top:505.2px;width:60.5px;height:16.1px;background:#fff;border:.5px solid #dde3ea;border-left:1.3px solid #0f6a68"></div>
<div class="a" style="left:259.5px;top:508.0px;width:10px;height:1.2px;background:#555;"></div>
<div class="a" style="left:259.5px;top:511.2px;width:50px;height:1px;background:#b8bcc4;"></div>
<div class="a" style="left:259.5px;top:513.2px;width:46px;height:1px;background:#b8bcc4;"></div>
<div class="a" style="left:192px;top:523px;width:61px;height:16.2px;background:#fff;border:.5px solid #dde3ea;border-left:1.3px solid #0f6a68"></div>
<div class="a" style="left:195.5px;top:525.8px;width:10px;height:1.2px;background:#555;"></div>
<div class="a" style="left:195.5px;top:529px;width:50px;height:1px;background:#b8bcc4;"></div>
<div class="a" style="left:195.5px;top:531px;width:46px;height:1px;background:#b8bcc4;"></div>
<div class="a" style="left:256px;top:523px;width:60.5px;height:16.2px;background:#fff;border:.5px solid #dde3ea;border-left:1.3px solid #0f6a68"></div>
<div class="a" style="left:259.5px;top:525.8px;width:10px;height:1.2px;background:#555;"></div>
<div class="a" style="left:259.5px;top:529px;width:50px;height:1px;background:#b8bcc4;"></div>
<div class="a" style="left:259.5px;top:531px;width:46px;height:1px;background:#b8bcc4;"></div>
<div class="a" style="left:188.5px;top:573px;width:131.5px;height:73.5px;background:#f1f3f8;"></div>
<div class="a" style="left:188.5px;top:573px;width:131.5px;height:10px;background:#1e2554;"></div>
<div class="a" style="left:188.5px;top:643.3px;width:131.5px;height:3.2px;background:#1e2554;"></div>
<div class="a" style="left:188.5px;top:573px;width:2px;height:73.5px;background:#137270;"></div>
<div class="a" style="left:192.0px;top:577px;width:4px;height:2px;background:#1aa2a2;"></div>
<div class="a" style="left:199.0px;top:577px;width:29px;height:2.2px;background:rgba(255,255,255,.8);"></div>
<div class="a" style="left:192px;top:585.2px;width:61px;height:24.5px;background:#fff;border:.5px solid #dde3ea"></div>
<div class="a" style="left:192px;top:585.2px;width:61px;height:5.6px;background:#15807a;"></div>
<div class="a" style="left:195px;top:587.2px;width:18px;height:1.2px;background:rgba(255,255,255,.7);"></div>
<div class="a" style="left:195px;top:592.7px;width:54px;height:1px;background:#b8bcc4;"></div>
<div class="a" style="left:195px;top:594.7px;width:54px;height:1px;background:#b8bcc4;"></div>
<div class="a" style="left:195px;top:596.7px;width:20px;height:1px;background:#c4c8ce;"></div>
<div class="a" style="left:256.3px;top:585.2px;width:61.69999999999999px;height:24.5px;background:#fff;border:.5px solid #dde3ea"></div>
<div class="a" style="left:256.3px;top:585.2px;width:61.69999999999999px;height:5.6px;background:#6a4cc8;"></div>
<div class="a" style="left:259.3px;top:587.2px;width:18px;height:1.2px;background:rgba(255,255,255,.7);"></div>
<div class="a" style="left:259.3px;top:592.7px;width:54px;height:1px;background:#b8bcc4;"></div>
<div class="a" style="left:259.3px;top:594.7px;width:54px;height:1px;background:#b8bcc4;"></div>
<div class="a" style="left:259.3px;top:596.7px;width:20px;height:1px;background:#c4c8ce;"></div>
<div class="a" style="left:192px;top:611.6px;width:61px;height:24.5px;background:#fff;border:.5px solid #dde3ea"></div>
<div class="a" style="left:192px;top:611.6px;width:61px;height:5.6px;background:#3a88c0;"></div>
<div class="a" style="left:195px;top:613.6px;width:18px;height:1.2px;background:rgba(255,255,255,.7);"></div>
<div class="a" style="left:195px;top:619.1px;width:54px;height:1px;background:#b8bcc4;"></div>
<div class="a" style="left:195px;top:621.1px;width:54px;height:1px;background:#b8bcc4;"></div>
<div class="a" style="left:195px;top:623.1px;width:20px;height:1px;background:#c4c8ce;"></div>
<div class="a" style="left:256.3px;top:611.6px;width:61.69999999999999px;height:24.5px;background:#fff;border:.5px solid #dde3ea"></div>
<div class="a" style="left:256.3px;top:611.6px;width:61.69999999999999px;height:5.6px;background:#e8a838;"></div>
<div class="a" style="left:259.3px;top:613.6px;width:18px;height:1.2px;background:rgba(255,255,255,.7);"></div>
<div class="a" style="left:259.3px;top:619.1px;width:54px;height:1px;background:#b8bcc4;"></div>
<div class="a" style="left:259.3px;top:621.1px;width:54px;height:1px;background:#b8bcc4;"></div>
<div class="a" style="left:259.3px;top:623.1px;width:20px;height:1px;background:#c4c8ce;"></div>
<div class="a" style="left:188.5px;top:663.6px;width:131.5px;height:73.5px;background:#f1f3f8;"></div>
<div class="a" style="left:188.5px;top:663.6px;width:131.5px;height:10px;background:#1e2554;"></div>
<div class="a" style="left:188.5px;top:733.9px;width:131.5px;height:3.2px;background:#1e2554;"></div>
<div class="a" style="left:188.5px;top:663.6px;width:2px;height:73.5px;background:#137270;"></div>
<div class="a" style="left:192.0px;top:667.6px;width:4px;height:2px;background:#1aa2a2;"></div>
<div class="a" style="left:199.0px;top:667.6px;width:47px;height:2.2px;background:rgba(255,255,255,.8);"></div>
<div class="a" style="left:192px;top:675px;width:41px;height:21px;background:#1e2554;"></div>
<div class="a" style="left:195px;top:677px;width:9px;height:9px;background:radial-gradient(circle,#05070f 0,#0a0e1c 55%,rgba(10,14,28,0) 72%);"></div>
<div class="a" style="left:206px;top:678.5px;width:14px;height:1.6px;background:#dde;"></div>
<div class="a" style="left:195px;top:688px;width:14px;height:1px;background:#aab;"></div>
<div class="a" style="left:195px;top:690px;width:11px;height:1px;background:#99a;"></div>
<div class="a" style="left:195px;top:692px;width:14px;height:1px;background:#99a;"></div>
<div class="a" style="left:193px;top:698.7px;width:31px;height:1px;background:#999;"></div>
<div class="a" style="left:192px;top:702px;width:41px;height:31px;background:radial-gradient(ellipse at 25% 25%,#f05818 0,#f47a20 22%,#f6b428 45%,#f0d438 62%,#b4dc44 80%,#e8c030 100%);"></div>
<div class="a" style="left:210px;top:700px;width:22px;height:20px;background:radial-gradient(ellipse at 50% 50%,rgba(238,90,30,.8),rgba(238,90,30,0) 70%);"></div>
<div class="a" style="left:213px;top:718px;width:18px;height:14px;background:radial-gradient(ellipse at 50% 50%,rgba(168,224,70,.8),rgba(168,224,70,0) 70%);"></div>
<div class="a" style="left:195px;top:721px;width:12px;height:9px;background:radial-gradient(ellipse at 50% 50%,#2f50d0 0,rgba(47,80,208,.7) 35%,rgba(47,80,208,0) 70%);"></div>
<div class="a" style="left:236px;top:675.5px;width:74px;height:6.5px;background:#eef3df;"></div>
<div class="a" style="left:238.5px;top:678.0px;width:5px;height:1.2px;background:#555;"></div>
<div class="a" style="left:249px;top:678.5px;width:32px;height:1px;background:#aab0b8;"></div>
<div class="a" style="left:236px;top:683.5px;width:74px;height:6.5px;background:#eef3df;"></div>
<div class="a" style="left:238.5px;top:686.0px;width:5px;height:1.2px;background:#555;"></div>
<div class="a" style="left:249px;top:686.5px;width:32px;height:1px;background:#aab0b8;"></div>
<div class="a" style="left:236px;top:691px;width:74px;height:6.5px;background:#e4eef8;"></div>
<div class="a" style="left:238.5px;top:693.5px;width:5px;height:1.2px;background:#555;"></div>
<div class="a" style="left:249px;top:694px;width:32px;height:1px;background:#aab0b8;"></div>
<div class="a" style="left:236px;top:698.5px;width:74px;height:6.5px;background:#e4eef8;"></div>
<div class="a" style="left:238.5px;top:701.0px;width:5px;height:1.2px;background:#555;"></div>
<div class="a" style="left:249px;top:701.5px;width:32px;height:1px;background:#aab0b8;"></div>
<div class="a" style="left:236px;top:706px;width:74px;height:6.5px;background:#e4eef8;"></div>
<div class="a" style="left:238.5px;top:708.5px;width:5px;height:1.2px;background:#555;"></div>
<div class="a" style="left:249px;top:709px;width:32px;height:1px;background:#aab0b8;"></div>
<div class="a" style="left:236px;top:714px;width:74px;height:6px;background:#fbeed8;"></div>
<div class="a" style="left:238.5px;top:716.5px;width:5px;height:1.2px;background:#555;"></div>
<div class="a" style="left:249px;top:717px;width:32px;height:1px;background:#aab0b8;"></div>
<div class="a" style="left:236px;top:721.5px;width:74px;height:6.5px;background:#fbeed8;"></div>
<div class="a" style="left:238.5px;top:724.0px;width:5px;height:1.2px;background:#555;"></div>
<div class="a" style="left:249px;top:724.5px;width:32px;height:1px;background:#aab0b8;"></div>
<div class="a" style="left:188.5px;top:754px;width:131.5px;height:73.5px;background:#f1f3f8;"></div>
<div class="a" style="left:188.5px;top:754px;width:131.5px;height:10px;background:#1e2554;"></div>
<div class="a" style="left:188.5px;top:754px;width:2px;height:73.5px;background:#137270;"></div>
<div class="a" style="left:192.0px;top:758px;width:4px;height:2px;background:#1aa2a2;"></div>
<div class="a" style="left:199.0px;top:758px;width:41px;height:2.2px;background:rgba(255,255,255,.8);"></div>
<div class="a" style="left:191px;top:766px;width:28.5px;height:20px;background:#e8f0f8;border:.5px solid #dde3ea"></div>
<div class="a" style="left:201.75px;top:771.5px;width:7px;height:1.8px;background:#2f7d86;"></div>
<div class="a" style="left:200.25px;top:775px;width:10px;height:1px;background:#9aa6ae;"></div>
<div class="a" style="left:222px;top:766px;width:28px;height:20px;background:#e8f0f8;border:.5px solid #dde3ea"></div>
<div class="a" style="left:232.5px;top:771.5px;width:7px;height:1.8px;background:#2f7d86;"></div>
<div class="a" style="left:231.0px;top:775px;width:10px;height:1px;background:#9aa6ae;"></div>
<div class="a" style="left:252px;top:766px;width:28px;height:20px;background:#fcefe4;border:.5px solid #dde3ea"></div>
<div class="a" style="left:262.5px;top:771.5px;width:7px;height:1.8px;background:#2f7d86;"></div>
<div class="a" style="left:261.0px;top:775px;width:10px;height:1px;background:#9aa6ae;"></div>
<div class="a" style="left:282.5px;top:766px;width:28.0px;height:20px;background:#fdecec;border:.5px solid #dde3ea"></div>
<div class="a" style="left:293.0px;top:771.5px;width:7px;height:1.8px;background:#2f7d86;"></div>
<div class="a" style="left:291.5px;top:775px;width:10px;height:1px;background:#9aa6ae;"></div>
</div>
<div class="t" style="left:169px;top:299.5px;font-size:10.5px;color:#595959;font-weight:normal;">2</div>
<div class="t" style="left:169px;top:390px;font-size:10.5px;color:#595959;font-weight:normal;">3</div>
<div class="t" style="left:169px;top:481px;font-size:10.5px;color:#595959;font-weight:normal;">4</div>
<div class="t" style="left:169px;top:571.5px;font-size:10.5px;color:#595959;font-weight:normal;">5</div>
<div class="t" style="left:169px;top:662px;font-size:10.5px;color:#595959;font-weight:normal;">6</div>
<div class="t" style="left:169px;top:752.5px;font-size:10.5px;color:#595959;font-weight:normal;">7</div>
<div class="a" style="left:0px;top:796px;width:1472px;height:50px;background:#000;"></div>
<div class="a" style="left:0px;top:846px;width:1472px;height:7px;background:#ebebeb;"></div>
<div class="a" style="left:717px;top:848px;width:31px;height:6px;background:#fafafa;border-radius:3px"></div>
<div class="a" style="left:-27px;top:743px;width:38px;height:38px;border-radius:50%;background:#2a2b2e;border:1.5px solid #c8c8c8"></div>
<svg class="a" style="left:-6px;top:804px;" width="16" height="22" viewBox="0 0 16 22"><path d="M4 2 a4 4 0 0 1 8 0 v7 a4 4 0 0 1 -8 0z" fill="none" stroke="#f0f0f0" stroke-width="1.5"/><path d="M1 9 a7 7 0 0 0 14 0 M8 16 v3 M4 20 h8" fill="none" stroke="#f0f0f0" stroke-width="1.5"/><path d="M1 19 L15 2" stroke="#e8195a" stroke-width="2"/></svg>
<div class="t" style="left:0px;top:829px;font-size:10.5px;color:#f0f0f0;font-weight:bold;transform:scaleX(0.889);transform-origin:0 0;">dio</div>
<svg class="a" style="left:24.5px;top:812.5px;" width="8" height="5" viewBox="0 0 8 5"><path d="M1 4.2 L4 1.2 L7 4.2" fill="none" stroke="#f0f0f0" stroke-width="1.3"/></svg>
<svg class="a" style="left:106.5px;top:812.5px;" width="8" height="5" viewBox="0 0 8 5"><path d="M1 4.2 L4 1.2 L7 4.2" fill="none" stroke="#f0f0f0" stroke-width="1.3"/></svg>
<svg class="a" style="left:68px;top:804px;" width="24" height="22" viewBox="0 0 24 22"><rect x="1.5" y="6" width="14" height="11" rx="2" fill="none" stroke="#f0f0f0" stroke-width="1.5"/><path d="M15.5 10 l6-3.5 v10 l-6-3.5" fill="none" stroke="#f0f0f0" stroke-width="1.5"/><path d="M2 21 L20 2" stroke="#e8195a" stroke-width="2"/></svg>
<div class="t" style="left:66px;top:829px;font-size:10.5px;color:#f0f0f0;font-weight:bold;transform:scaleX(0.916);transform-origin:0 0;">Video</div>
<svg class="a" style="left:654px;top:806px;" width="20" height="18" viewBox="0 0 20 18"><circle cx="6.9" cy="4.4" r="2.4" fill="none" stroke="#f0f0f0" stroke-width="1.4"/><circle cx="13.2" cy="7" r="2.4" fill="none" stroke="#f0f0f0" stroke-width="1.4"/><path d="M9.6 10.2 C 6 8.6, 2.9 10.2, 2.9 13 V14 C2.9 15.6 4 16.2 7.6 16.2" fill="none" stroke="#f0f0f0" stroke-width="1.4"/><rect x="9.4" y="11.4" width="8.2" height="5" rx="2.4" fill="none" stroke="#f0f0f0" stroke-width="1.4"/></svg>
<div class="t" style="left:677.5px;top:807.8px;font-size:10.3px;color:#d0d0d0;font-weight:normal;">14</div>
<svg class="a" style="left:705.5px;top:812.5px;" width="8" height="5" viewBox="0 0 8 5"><path d="M1 4.2 L4 1.2 L7 4.2" fill="none" stroke="#f0f0f0" stroke-width="1.3"/></svg>
<div class="t" style="left:638px;top:829px;font-size:10.5px;color:#f0f0f0;font-weight:bold;transform:scaleX(0.865);transform-origin:0 0;">Participants</div>
<svg class="a" style="left:747px;top:806px;" width="21" height="19" viewBox="0 0 21 19"><path d="M2 2.5 h17 v11 h-11 l-4.5 4 v-4 h-1.5z" fill="none" stroke="#f0f0f0" stroke-width="1.5" stroke-linejoin="round"/></svg>
<div class="t" style="left:747px;top:829px;font-size:10.5px;color:#f0f0f0;font-weight:bold;transform:scaleX(0.874);transform-origin:0 0;">Chat</div>
<svg class="a" style="left:781.5px;top:812.5px;" width="8" height="5" viewBox="0 0 8 5"><path d="M1 4.2 L4 1.2 L7 4.2" fill="none" stroke="#f0f0f0" stroke-width="1.3"/></svg>
<svg class="a" style="left:816px;top:804.5px;" width="25" height="23" viewBox="0 0 25 23"><g transform="rotate(20 12.5 12)"><path d="M12.5 19.5 C 6.5 15.5, 3.2 12.3, 3.2 8.6 A4.3 4.3 0 0 1 12.5 6.8 A4.3 4.3 0 0 1 21.8 8.6 C 21.8 12.3, 18.5 15.5, 12.5 19.5z" fill="none" stroke="#f0f0f0" stroke-width="1.4" stroke-linejoin="round"/></g></svg>
<div class="t" style="left:816px;top:829px;font-size:10.5px;color:#f0f0f0;font-weight:bold;transform:scaleX(0.874);transform-origin:0 0;">React</div>
<svg class="a" style="left:849.5px;top:812.5px;" width="8" height="5" viewBox="0 0 8 5"><path d="M1 4.2 L4 1.2 L7 4.2" fill="none" stroke="#f0f0f0" stroke-width="1.3"/></svg>
<svg class="a" style="left:893px;top:806px;" width="23" height="18" viewBox="0 0 23 18"><rect x="1.2" y="1.3" width="20" height="15" rx="2" fill="none" stroke="#f0f0f0" stroke-width="1.4"/><path d="M11.2 12.5 v-7.2 M8 8.4 l3.2-3.2 3.2 3.2" fill="none" stroke="#f0f0f0" stroke-width="1.4"/></svg>
<div class="t" style="left:891px;top:829px;font-size:10.5px;color:#f0f0f0;font-weight:bold;transform:scaleX(0.891);transform-origin:0 0;">Share</div>
<svg class="a" style="left:931.5px;top:812.5px;" width="8" height="5" viewBox="0 0 8 5"><path d="M1 4.2 L4 1.2 L7 4.2" fill="none" stroke="#f0f0f0" stroke-width="1.3"/></svg>
<svg class="a" style="left:970px;top:804px;" width="23" height="23" viewBox="0 0 23 23"><circle cx="11.5" cy="11.5" r="10.2" fill="none" stroke="#f0f0f0" stroke-width="1.5"/><circle cx="7" cy="11.5" r="1.3" fill="#f0f0f0"/><circle cx="11.5" cy="11.5" r="1.3" fill="#f0f0f0"/><circle cx="16" cy="11.5" r="1.3" fill="#f0f0f0"/></svg>
<div class="t" style="left:969px;top:829px;font-size:10.5px;color:#f0f0f0;font-weight:bold;transform:scaleX(0.997);transform-origin:0 0;">More</div>
</body></html>
